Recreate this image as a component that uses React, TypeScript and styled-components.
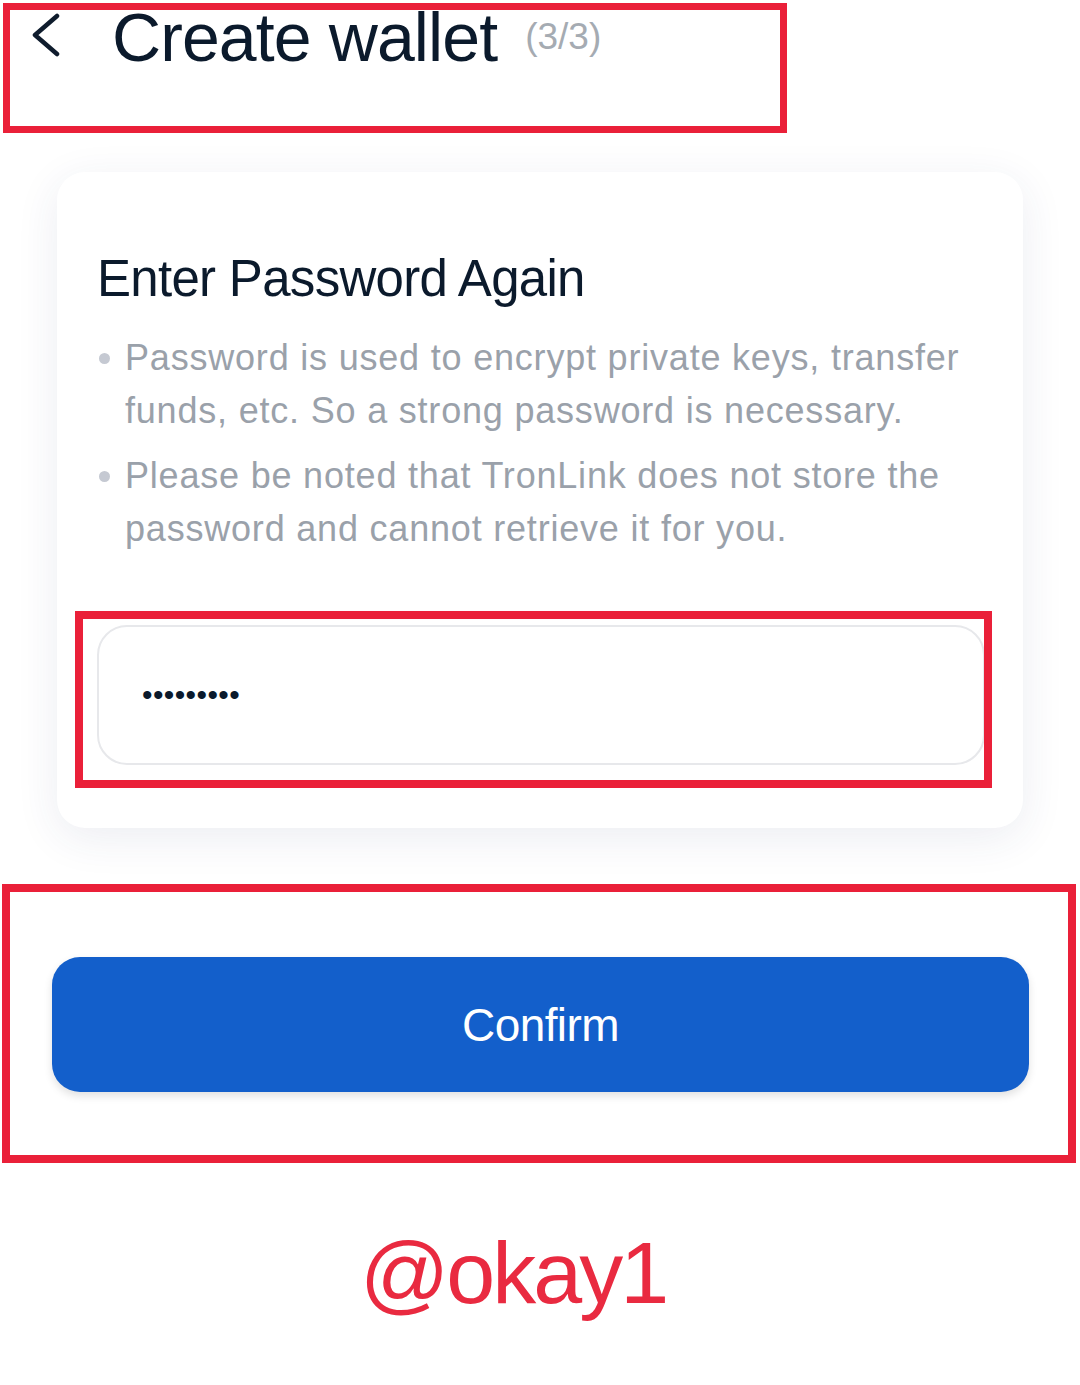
import React from "react";
import styled, { createGlobalStyle } from "styled-components";

const GlobalStyle = createGlobalStyle`
  * { box-sizing: border-box; }
  html, body { margin: 0; padding: 0; background: #ffffff; }
  body {
    font-family: "Liberation Sans", Arial, Helvetica, sans-serif;
    color: #0b1a2c;
  }
`;

const annotationRed = "#ea2039";

const Page = styled.main`
  width: 1080px;
  min-height: 1385px;
  background: #ffffff;
  padding-top: 3px;
  overflow: hidden;
`;

const HeaderFrame = styled.header`
  width: 784px;
  height: 130px;
  margin-left: 3px;
  border: 7px solid ${annotationRed};
  display: flex;
  align-items: flex-start;
`;

const BackButton = styled.button`
  flex: none;
  width: 30px;
  height: 44px;
  margin: 3px 0 0 22px;
  padding: 0;
  border: none;
  background: transparent;
  display: flex;
  align-items: center;
  justify-content: center;
  color: #0f1c2d;
`;

const Title = styled.h1`
  margin: -7px 0 0 50px;
  font-size: 68px;
  line-height: 68px;
  font-weight: 400;
  letter-spacing: -0.9px;
  color: #0b1a2c;
  white-space: nowrap;
`;

const Step = styled.span`
  margin: 9px 0 0 28px;
  font-size: 37px;
  line-height: 36px;
  color: #a5abb2;
  white-space: nowrap;
`;

const Card = styled.section`
  margin: 39px 57px 0;
  padding: 77px 38px 63px 40px;
  background: #ffffff;
  border-radius: 28px;
  box-shadow: 0 10px 44px rgba(40, 60, 110, 0.09);
`;

const CardTitle = styled.h2`
  margin: 0;
  font-size: 51px;
  line-height: 60px;
  font-weight: 400;
  letter-spacing: -0.7px;
  color: #0b1a2c;
`;

const Notes = styled.ul`
  list-style: none;
  margin: 22px 0 0;
  padding: 0;
  display: flex;
  flex-direction: column;
  gap: 12px;
`;

const Note = styled.li`
  display: flex;
  align-items: flex-start;
  font-size: 36px;
  line-height: 53px;
  color: #9aa1aa;
  letter-spacing: 0.8px;

  &::before {
    content: "";
    flex: none;
    width: 11px;
    height: 11px;
    border-radius: 50%;
    background: #c5c9d2;
    margin: 22px 15px 0 2px;
  }
`;

const InputWrap = styled.div`
  position: relative;
  margin-top: 70px;

  &::after {
    content: "";
    position: absolute;
    top: -14px;
    left: -22px;
    right: -7px;
    bottom: -23px;
    border: 8px solid ${annotationRed};
    pointer-events: none;
  }
`;

const PasswordInput = styled.input`
  display: block;
  width: 100%;
  height: 140px;
  padding: 0 0 0 43px;
  border: 2px solid #e7e8eb;
  border-radius: 30px;
  background: #ffffff;
  font-family: "Liberation Sans", Arial, sans-serif;
  font-size: 30px;
  letter-spacing: 0.4px;
  color: #0b1a2c;
  outline: none;
`;

const ActionFrame = styled.div`
  width: 1074px;
  margin: 56px 0 0 2px;
  padding: 65px 39px 63px 42px;
  border: 8px solid ${annotationRed};
`;

const ConfirmButton = styled.button`
  display: block;
  width: 100%;
  height: 135px;
  border: none;
  border-radius: 28px;
  background: #135fcb;
  color: #ffffff;
  font-family: "Liberation Sans", Arial, sans-serif;
  font-size: 46px;
  letter-spacing: -0.6px;
  box-shadow: 0 4px 8px rgba(0, 0, 0, 0.12);
  cursor: pointer;
`;

const Watermark = styled.div`
  margin-top: 66px;
  padding-left: 360px;
  font-size: 88px;
  line-height: 88px;
  letter-spacing: -3px;
  color: #e92a40;
  white-space: nowrap;
`;

const ChevronLeft = () => (
  <svg width="30" height="44" viewBox="0 0 30 44" fill="none">
    <path
      d="M25 3 L3 22 L25 41"
      stroke="currentColor"
      strokeWidth="4.5"
      strokeLinecap="round"
      strokeLinejoin="round"
    />
  </svg>
);

export default function App() {
  return (
    <>
      <GlobalStyle />
      <Page>
        <HeaderFrame>
          <BackButton aria-label="Back">
            <ChevronLeft />
          </BackButton>
          <Title>Create wallet</Title>
          <Step>(3/3)</Step>
        </HeaderFrame>

        <Card>
          <CardTitle>Enter Password Again</CardTitle>
          <Notes>
            <Note>
              Password is used to encrypt private keys, transfer funds, etc. So a
              strong password is necessary.
            </Note>
            <Note>
              Please be noted that TronLink does not store the password and cannot
              retrieve it for you.
            </Note>
          </Notes>
          <InputWrap>
            <PasswordInput type="password" value="123456789" readOnly />
          </InputWrap>
        </Card>

        <ActionFrame>
          <ConfirmButton>Confirm</ConfirmButton>
        </ActionFrame>

        <Watermark>@okay1</Watermark>
      </Page>
    </>
  );
}
